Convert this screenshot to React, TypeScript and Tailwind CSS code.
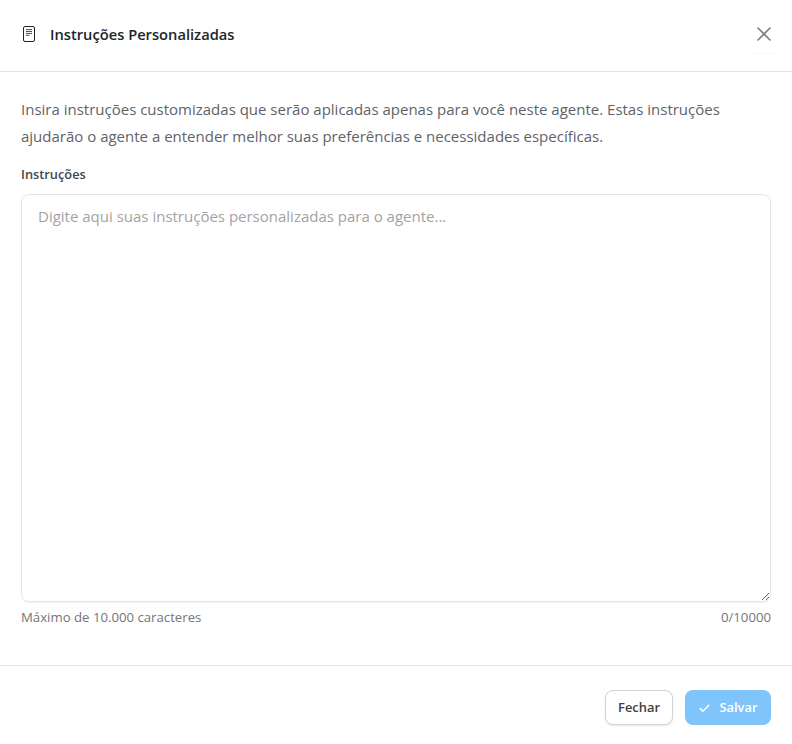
import React from 'react';
import { Check, X } from 'lucide-react';

const DocIcon = () => (
  <svg width="16" height="16" viewBox="0 0 16 16" fill="none" className="text-[#212529]">
    <rect x="2.5" y="0.5" width="11" height="15" rx="1.5" stroke="currentColor" strokeWidth="1" />
    <path d="M5 3.6h6M5 5.5h6M5 7.4h6M5 9.3h3.5" stroke="currentColor" strokeWidth="0.8" />
  </svg>
);

const App: React.FC = () => {
  return (
    <div className="flex h-[744px] w-[792px] flex-col bg-white font-['Open_Sans',sans-serif]">
      {/* Header */}
      <div className="flex h-[72px] items-center justify-between border-b border-[#e5e5e5] pb-[3px] pl-[21px] pr-[9px]">
        <div className="flex items-center gap-[13px]">
          <DocIcon />
          <h3 className="pt-[1px] text-[14.7px] font-semibold text-[#212529]">Instruções Personalizadas</h3>
        </div>
        <button className="flex h-[38px] w-[38px] items-center justify-center rounded-lg text-[#808080] shadow-[0_1px_1px_rgba(0,0,0,0.03)]">
          <X className="h-[24px] w-[24px]" strokeWidth={1.7} />
        </button>
      </div>

      {/* Body */}
      <div className="flex flex-col px-[21px] pt-[24px]">
        <p className="text-[15px] leading-[27px] text-[#5f6368]">
          Insira instruções customizadas que serão aplicadas apenas para você neste agente. Estas instruções
          ajudarão o agente a entender melhor suas preferências e necessidades específicas.
        </p>
        <label className="mt-[14px] text-[12.8px] leading-[20px] font-semibold text-[#43474b]">Instruções</label>
        <textarea
          className="mt-[10px] h-[408px] w-full rounded-lg border border-[#e5e5e5] px-[16px] py-[9px] text-[15px] leading-[24px] shadow-[0_1px_1px_rgba(0,0,0,0.05)] outline-none placeholder:text-[#a3a3a3]"
          placeholder="Digite aqui suas instruções personalizadas para o agente..."
        />
        <div className="mt-[6px] flex justify-between text-[13.2px] leading-[18px] text-[#757575]">
          <span>Máximo de 10.000 caracteres</span>
          <span>0/10000</span>
        </div>
      </div>

      {/* Footer */}
      <div className="mt-[39px] flex items-center justify-end gap-[12px] border-t border-[#e5e5e5] px-[21px] pt-[24px]">
        <button className="h-[35px] w-[68px] rounded-lg border border-[#d4d4d4] bg-white pt-[1px] text-[12.9px] font-semibold text-[#404040] shadow-[0_1px_2px_rgba(0,0,0,0.1)]">
          Fechar
        </button>
        <button className="flex h-[35px] w-[86px] items-center justify-center gap-[8px] rounded-lg bg-[#7fc4fb] pt-[1px] text-[12.9px] font-semibold text-white">
          <Check className="h-[13px] w-[13px]" strokeWidth={3} />
          Salvar
        </button>
      </div>
    </div>
  );
};

export default App;
